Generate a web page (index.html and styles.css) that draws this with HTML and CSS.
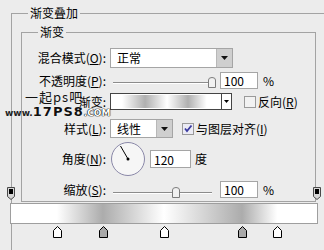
FILE: index.html
```html
<!DOCTYPE html>
<html lang="zh-CN">
<head>
  <meta charset="UTF-8" />
  <title>渐变叠加</title>
  <link rel="stylesheet" href="styles.css">
</head>
<body>
  <div class="dialog">
    <fieldset class="group outer">
      <legend>渐变叠加</legend>

      <fieldset class="group inner">
        <legend>渐变</legend>

        <!-- 混合模式 -->
        <div class="row row-mode">
          <label class="lbl">混合模式(<u>O</u>):</label>
          <div class="select select-mode">
            <span class="select-text">正常</span>
            <span class="drop-btn"><svg width="7" height="4"><path d="M0 0h7L3.5 4z"/></svg></span>
          </div>
        </div>

        <!-- 不透明度 -->
        <div class="row row-opacity">
          <label class="lbl">不透明度(<u>P</u>):</label>
          <div class="slider">
            <div class="track">
              <span class="thumb" style="left:100%"><svg width="8" height="11"><path d="M0.5 3Q0.5 0.5 4 0.5T7.5 3V10.5H0.5Z"/></svg></span>
            </div>
          </div>
          <input class="num" type="text" value="100">
          <span class="unit">%</span>
        </div>

        <!-- 渐变 -->
        <div class="row row-gradient">
          <label class="lbl">渐变:</label>
          <div class="grad-picker">
            <div class="grad-preview"></div>
            <span class="grad-drop"><svg width="5" height="3"><path d="M0 0h5L2.5 3z"/></svg></span>
          </div>
          <span class="check check-reverse"><svg width="12" height="12"><rect x="0.5" y="0.5" width="11" height="11"/></svg></span>
          <span class="check-text">反向(<u>R</u>)</span>
        </div>

        <!-- 样式 -->
        <div class="row row-style">
          <label class="lbl">样式(<u>L</u>):</label>
          <div class="select select-style">
            <span class="select-text">线性</span>
            <span class="drop-btn"><svg width="7" height="4"><path d="M0 0h7L3.5 4z"/></svg></span>
          </div>
          <span class="check check-align on"><svg width="12" height="12"><rect x="0.5" y="0.5" width="11" height="11"/><path class="tick" d="M3 5.5l2 2.5L9.5 2.5"/></svg></span>
          <span class="check-text">与图层对齐(<u>I</u>)</span>
        </div>

        <!-- 角度 -->
        <div class="row row-angle">
          <label class="lbl">角度(<u>N</u>):</label>
          <svg class="dial" width="36" height="36">
            <circle class="dial-face" cx="18" cy="18" r="16.5"/>
            <line class="dial-hand" x1="18" y1="18" x2="10.5" y2="5"/>
            <circle cx="18" cy="18" r="1.5"/>
          </svg>
          <input class="num num-angle" type="text" value="120">
          <span class="unit">度</span>
        </div>

        <!-- 缩放 -->
        <div class="row row-scale">
          <label class="lbl">缩放(<u>S</u>):</label>
          <div class="slider">
            <div class="track">
              <span class="thumb" style="left:64%"><svg width="8" height="11"><path d="M0.5 3Q0.5 0.5 4 0.5T7.5 3V10.5H0.5Z"/></svg></span>
            </div>
          </div>
          <input class="num" type="text" value="100">
          <span class="unit">%</span>
        </div>
      </fieldset>

      <!-- gradient editor -->
      <div class="grad-bar">
        <div class="stops stops-top">
          <span class="stop" style="left:0%"><svg width="8" height="13"><path class="op-frame" d="M0.5 0.5H7.5V9.5L4 12.5L0.5 9.5Z"/><rect x="2" y="2" width="4" height="5"/></svg></span>
          <span class="stop" style="left:100%"><svg width="8" height="13"><path class="op-frame" d="M0.5 0.5H7.5V9.5L4 12.5L0.5 9.5Z"/><rect x="2" y="2" width="4" height="5"/></svg></span>
        </div>
        <div class="stops stops-bottom">
          <span class="stop" style="left:15%"><svg width="9" height="12"><path class="cs white" d="M4.5 0.5L8.5 4.5V11.5H0.5V4.5Z"/></svg></span>
          <span class="stop" style="left:30%"><svg width="9" height="12"><path class="cs gray" d="M4.5 0.5L8.5 4.5V11.5H0.5V4.5Z"/></svg></span>
          <span class="stop" style="left:50%"><svg width="9" height="12"><path class="cs white" d="M4.5 0.5L8.5 4.5V11.5H0.5V4.5Z"/></svg></span>
          <span class="stop" style="left:75.5%"><svg width="9" height="12"><path class="cs gray" d="M4.5 0.5L8.5 4.5V11.5H0.5V4.5Z"/></svg></span>
          <span class="stop" style="left:87%"><svg width="9" height="12"><path class="cs white" d="M4.5 0.5L8.5 4.5V11.5H0.5V4.5Z"/></svg></span>
        </div>
      </div>
    </fieldset>

    <!-- site watermark -->
    <div class="watermark">
      <div class="wm-top">一起ps吧</div>
      <div class="wm-url"><span class="wm-www">www.</span><span class="wm-num">17PS8</span><span class="wm-com">.COM</span></div>
    </div>
  </div>
</body>
</html>
```

FILE: styles.css
```css
* {
  margin: 0;
  padding: 0;
  box-sizing: border-box;
}

html, body {
  width: 324px;
  height: 250px;
  overflow: hidden;
}

body {
  background: #ececec;
  color: #000;
  font-family: "Noto Sans CJK SC", "Liberation Sans", sans-serif;
  font-size: 12px;
  line-height: 14px;
}

.dialog {
  position: relative;
  height: 250px;
  padding: 6px 0 0 11px;
}

/* group boxes */
.group {
  border: 1px solid #a3a3a3;
}

.group > legend {
  padding: 0 2px;
  line-height: 14px;
}

/* outer box runs off the right and bottom of the crop */
.outer {
  width: 313px;
  height: 244px;
  padding: 5px 0 0 9px;
  border-right: none;
  border-bottom: none;
}

.outer > legend {
  margin-left: 7px;
}

.inner {
  width: 295px;
  padding: 9px 0 3px 0;
}

.inner > legend {
  margin-left: 16px;
}

/* rows */
.row {
  display: flex;
  align-items: center;
}

.row-mode { height: 20px; }
.row-opacity { height: 17px; margin-top: 4px; }
.row-gradient { height: 17px; margin-top: 4px; }
.row-style { height: 19px; margin-top: 9px; }
.row-angle { height: 34px; margin-top: 4px; }
.row-scale { height: 17px; margin-top: 5px; }

.lbl {
  width: 84px;
  margin-right: 4px;
  text-align: right;
  white-space: nowrap;
}

/* select boxes */
.select {
  display: flex;
  height: 100%;
  background: #fff;
  border: 1px solid #a5a5a5;
}

.select-mode { width: 123px; }
.select-style { width: 63px; }

.select-text {
  flex: 1;
  padding-left: 6px;
  line-height: 18px;
}

.drop-btn {
  width: 16px;
  display: flex;
  align-items: center;
  justify-content: center;
  background: #cfcfcf;
  border-left: 1px solid #b8b8b8;
}

.drop-btn svg {
  fill: #111;
}

/* sliders */
.slider {
  position: relative;
  width: 106px;
  height: 100%;
}

.track {
  position: absolute;
  left: 3px;
  right: 4px;
  top: 10px;
  height: 2px;
  border-top: 1px solid #8c8c8c;
  border-bottom: 1px solid #fff;
}

.row-scale .track {
  top: 11px;
}

.thumb {
  position: absolute;
  top: -6px;
  margin-left: -4px;
  line-height: 0;
}

.thumb svg {
  fill: #f1f1f1;
  stroke: #7c7c7c;
}

/* number inputs */
.num {
  width: 38px;
  height: 17px;
  margin-left: 4px;
  padding-left: 3px;
  border: 1px solid #a5a5a5;
  background: #fff;
  font: inherit;
  line-height: 15px;
}

.num-angle {
  width: 41px;
  height: 18px;
  margin-left: 4px;
}

.unit {
  margin-left: 5px;
}

.row-angle .unit {
  margin-left: 4px;
}

/* gradient picker */
.grad-picker {
  display: flex;
  width: 122px;
  height: 100%;
}

.grad-preview {
  flex: 1;
  border: 1px solid #444;
  box-shadow: inset 0 0 0 1px #fff;
  background: linear-gradient(to right, #fff 10%, #b0b0b0 31%, #fff 51%, #b0b0b0 70%, #fff 87%);
}

.grad-drop {
  width: 10px;
  display: flex;
  align-items: center;
  justify-content: center;
  background: #fff;
  border: 1px solid #444;
  border-left: none;
}

.grad-drop svg {
  fill: #000;
}

/* checkboxes */
.check {
  line-height: 0;
}

.check-reverse { margin-left: 12px; }
.check-align { margin-left: 9px; }

.check rect {
  fill: #f2f2f2;
  stroke: #9a9a9a;
}

.check.on rect {
  fill: #ebebf4;
}

.check .tick {
  fill: none;
  stroke: #3a3aa0;
  stroke-width: 1.8;
}

.check-text {
  margin-left: 2px;
}

/* angle dial */
.dial {
  display: block;
}

.dial-face {
  fill: #f6f6f6;
  stroke: #8a88a8;
}

.dial-hand {
  stroke: #000;
  stroke-width: 1;
}

/* gradient editor bar */
.grad-bar {
  position: relative;
  width: 308px;
  height: 21px;
  margin: 1px 0 0 -11px;
  border: 1px solid #9e9e9e;
  background: linear-gradient(to right, #fff 15%, #acacac 30%, #fff 50%, #acacac 75.5%, #fff 87%);
}

.stops {
  position: absolute;
  left: 0;
  right: 0;
}

.stops-top {
  bottom: calc(100% + 4px);
  height: 13px;
}

.stops-bottom {
  top: calc(100% + 3px);
  height: 12px;
}

.stop {
  position: absolute;
  top: 0;
  margin-left: -4px;
  line-height: 0;
}

.op-frame {
  fill: #d6d6d6;
  stroke: #4a4a4a;
}

.cs {
  stroke: #000;
}

.cs.white { fill: #fff; }
.cs.gray { fill: #a9a9a9; }

/* watermark */
.watermark {
  position: absolute;
  left: 5px;
  top: 89px;
  pointer-events: none;
}

.wm-top {
  margin-left: 20px;
  font-size: 13px;
  line-height: 15px;
  letter-spacing: 1px;
  color: #111;
}

.wm-url {
  margin-top: 2px;
  white-space: nowrap;
  font-family: "DejaVu Sans", sans-serif;
  font-weight: bold;
  line-height: 12px;
}

.wm-www {
  font-size: 9px;
  color: #222;
}

.wm-num {
  font-size: 13px;
  color: #111;
  letter-spacing: 1px;
  text-shadow: 0 0 1px #fff, 0 0 1px #fff;
}

.wm-com {
  font-size: 9px;
  color: #fff;
  text-shadow: 0 0 1px #000, 0 0 1px #000, 0 0 1px #000;
}
```
